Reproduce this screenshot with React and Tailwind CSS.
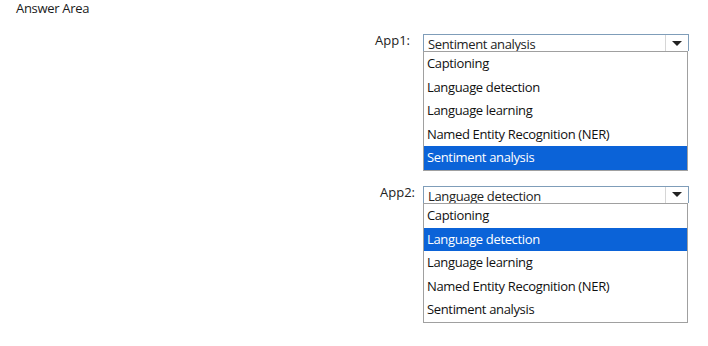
import React from "react";

const OPTIONS = [
  "Captioning",
  "Language detection",
  "Language learning",
  "Named Entity Recognition (NER)",
  "Sentiment analysis",
];

function Dropdown({ label, value, labelPad }) {
  return (
    <div className="flex">
      <div className={`w-[423px] flex justify-end items-start ${labelPad}`}>
        <span className="text-[13px] leading-[13px] text-[#222]">{label}</span>
      </div>
      <div className="flex flex-col">
        {/* closed select */}
        <div className="w-[266px] h-[17px] border border-[#7f9db9] border-b-0 bg-white flex overflow-hidden">
          <div className="flex-1 pl-[4px] text-[13px] leading-[19px] tracking-[-0.35px] text-[#222] whitespace-nowrap">
            {value}
          </div>
          <div className="w-[23px] border-l border-[#d6d6d6] flex items-center justify-center">
            <svg width="10" height="5" viewBox="0 0 10 5">
              <path d="M0 0 H10 L5 5 Z" fill="#222" />
            </svg>
          </div>
        </div>
        {/* open list */}
        <div className="w-[265px] border border-[#a0a0a0] bg-white flex flex-col">
          {OPTIONS.map((opt) => (
            <div
              key={opt}
              className={`h-[23.6px] pl-[3px] flex items-center text-[13px] tracking-[-0.35px] whitespace-nowrap ${
                opt === value ? "bg-[#0b63d8] text-white" : "text-[#111]"
              }`}
            >
              {opt}
            </div>
          ))}
        </div>
      </div>
    </div>
  );
}

export default function App() {
  return (
    <div className="w-[708px] h-[346px] bg-white overflow-hidden font-['Segoe_UI','Open_Sans','Noto_Sans',sans-serif]">
      <div className="pl-[16px] text-[13px] leading-[16px] tracking-[-0.3px] text-[#1a1a1a]">Answer Area</div>
      <div className="mt-[18px]">
        <Dropdown label="App1:" value="Sentiment analysis" labelPad="pr-[13px]" />
      </div>
      <div className="mt-[15px]">
        <Dropdown label="App2:" value="Language detection" labelPad="pr-[8px]" />
      </div>
    </div>
  );
}
